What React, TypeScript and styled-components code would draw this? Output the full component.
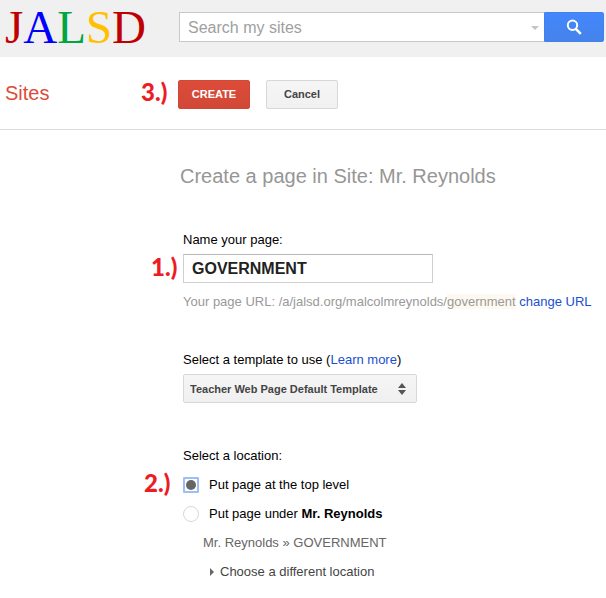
import React, { useState } from "react";
import styled, { createGlobalStyle } from "styled-components";

const GlobalStyle = createGlobalStyle`
  *, *::before, *::after { box-sizing: border-box; }
  body {
    margin: 0;
    background: #fff;
    color: #000;
    font: 13px/20px "Liberation Sans", Arial, sans-serif;
  }
  button, input, select { font-family: inherit; margin: 0; }
`;

const TopBar = styled.header`
  display: grid;
  grid-template-columns: 179px minmax(0, 1fr) 60px;
  align-items: center;
  padding: 0 2px 3px 0;
  height: 57px;
  background: #f0f0f0;
`;

const Logo = styled.a`
  padding-left: 5px;
  font: 47px/54px "Liberation Serif", "Times New Roman", serif;
  text-decoration: none;
`;

const Letter = styled.span<{ $color: string }>`
  color: ${(p) => p.$color};
`;

const SearchBox = styled.div`
  display: flex;
  align-items: center;
  height: 30px;
  padding: 1px 5px 0 8px;
  background: #fff;
  border: 1px solid #c8c8c8;
  border-right: 0;
`;

const SearchInput = styled.input`
  flex: 1;
  min-width: 0;
  padding: 0;
  border: 0;
  outline: 0;
  background: none;
  font-size: 16px;
  line-height: 24px;
  &::placeholder { color: #a0a0a0; opacity: 1; }
`;

const OptionsButton = styled.button`
  display: flex;
  padding: 0;
  border: 0;
  background: none;
`;

const SearchButton = styled.button`
  display: flex;
  align-items: center;
  justify-content: center;
  height: 30px;
  padding: 0;
  border: 1px solid #4280ee;
  border-radius: 0 2px 2px 0;
  background: linear-gradient(#4387fd, #4683ea);
`;

const ActionBar = styled.div`
  display: flex;
  align-items: center;
  height: 73px;
  padding: 2px 0 0 5px;
  border-bottom: 1px solid #dcdcdc;
`;

const Product = styled.h1`
  flex: 0 0 136px;
  margin: 0;
  padding-bottom: 2px;
  color: #dd4b39;
  font-size: 20px;
  font-weight: 400;
  line-height: 24px;
`;

const Step = styled.span`
  padding-bottom: 4px;
  color: #ed1c24;
  font: 900 24px/24px Lato, "Open Sans", sans-serif;
`;

const ActionStep = styled(Step)`
  flex: 0 0 37px;
`;

const ActionButton = styled.button<{ $primary?: boolean }>`
  width: 72px;
  height: 29px;
  margin-right: 16px;
  padding: 0;
  border: 1px solid ${(p) => (p.$primary ? "#d14836" : "#d8d8d8")};
  border-radius: 2px;
  background: ${(p) =>
    p.$primary ? "linear-gradient(#dd4b39, #d14836)" : "linear-gradient(#f5f5f5, #f1f1f1)"};
  color: ${(p) => (p.$primary ? "#fff" : "#444")};
  font-size: 11px;
  font-weight: 700;
`;

const Title = styled.h2`
  margin: 34px 0 0 180px;
  color: #969696;
  font-size: 20px;
  font-weight: 400;
  line-height: 24px;
`;

const Section = styled.section<{ $gap: number }>`
  margin-top: ${(p) => p.$gap}px;
  padding-left: 183px;
`;

const Group = styled.fieldset`
  min-width: 0;
  margin: 43px 0 0;
  padding: 0;
  border: 0;
`;

const Label = styled.label`
  display: block;
`;

const Indent = styled.div`
  padding-left: 183px;
`;

const Line = styled.div`
  display: flex;
  white-space: pre;
`;

const StepRow = styled.div<{ $start: number }>`
  display: grid;
  grid-template-columns: ${(p) => 183 - p.$start}px minmax(0, 1fr);
  align-items: center;
  height: 29px;
  margin-top: 4px;
  padding-left: ${(p) => p.$start}px;
`;

const NameInput = styled.input`
  width: 250px;
  max-width: 100%;
  height: 29px;
  padding: 0 8px;
  border: 1px solid #d0d0d0;
  border-top-color: #b8b8b8;
  outline: 0;
  color: #222;
  font-size: 16px;
  font-weight: 700;
`;

const Url = styled.p`
  margin: 9px 0 0;
  color: #999;
  white-space: nowrap;
`;

const Slug = styled.span`
  background: #fef9f0;
`;

const Link = styled.a`
  color: #1a4fd0;
  text-decoration: none;
`;

const SelectFrame = styled.div`
  display: grid;
  width: 234px;
  max-width: 100%;
  margin-top: 4px;
  align-items: center;
  & > * { grid-area: 1 / 1; }
  & > svg { justify-self: end; margin-right: 11px; pointer-events: none; }
`;

const Select = styled.select`
  appearance: none;
  width: 100%;
  height: 29px;
  padding: 0 24px 0 6px;
  border: 1px solid #d8d8d8;
  border-radius: 2px;
  outline: 0;
  background: linear-gradient(#f5f5f5, #f0f0f0);
  color: #444;
  font-size: 11px;
  font-weight: 700;
`;

const Choice = styled.label`
  display: flex;
  align-items: center;
  gap: 10px;
  height: 29px;
`;

const Radio = styled.input`
  appearance: none;
  display: grid;
  place-items: center;
  flex: none;
  width: 16px;
  height: 16px;
  border: 1px solid #d8d8d8;
  border-radius: 50%;
  background: #fff;
  &:checked {
    border: 2px solid #9dbff5;
    border-radius: 1px;
  }
  &:checked::before {
    content: "";
    width: 10px;
    height: 10px;
    border-radius: 50%;
    background: #666;
  }
`;

const Path = styled.div`
  padding-left: 20px;
  color: #666;
  line-height: 29px;
`;

const Expander = styled.button`
  display: flex;
  align-items: center;
  gap: 6px;
  height: 29px;
  margin-left: 27px;
  padding: 0;
  border: 0;
  background: none;
  color: #444;
  font-size: 13px;
`;

const letters = [
  ["J", "#c00000"],
  ["A", "#0000ff"],
  ["L", "#00a63f"],
  ["S", "#ffc000"],
  ["D", "#c00000"],
];

export default function App() {
  const [name, setName] = useState("GOVERNMENT");
  const [place, setPlace] = useState("top");

  return (
    <>
      <GlobalStyle />
      <TopBar>
        <Logo href="#" aria-label="JALSD">
          {letters.map(([letter, color], i) => (
            <Letter key={i} $color={color}>{letter}</Letter>
          ))}
        </Logo>
        <SearchBox>
          <SearchInput type="search" aria-label="Search my sites" placeholder="Search my sites" />
          <OptionsButton aria-label="Search options">
            <svg width="8" height="4" viewBox="0 0 8 4"><path d="M0 0h8L4 4z" fill="#c4c4c4" /></svg>
          </OptionsButton>
        </SearchBox>
        <SearchButton aria-label="Search">
          <svg width="16" height="16" viewBox="0 0 16 16" fill="none" stroke="#fff">
            <circle cx="6.5" cy="6.3" r="4.7" strokeWidth="2" />
            <path d="M9.8 9.8l5 5" strokeWidth="2.6" />
          </svg>
        </SearchButton>
      </TopBar>

      <ActionBar>
        <Product>Sites</Product>
        <ActionStep>3.)</ActionStep>
        <ActionButton $primary>CREATE</ActionButton>
        <ActionButton>Cancel</ActionButton>
      </ActionBar>

      <main>
        <Title>Create a page in Site: Mr. Reynolds</Title>

        <Section $gap={42}>
          <Label htmlFor="page-name">Name your page:</Label>
        </Section>
        <StepRow $start={151}>
          <Step>1.)</Step>
          <NameInput id="page-name" value={name} onChange={(e) => setName(e.target.value)} />
        </StepRow>
        <Indent>
          <Url>
            Your page URL: /a/jalsd.org/malcolmreynolds/<Slug>government</Slug>{" "}
            <Link href="#">change URL</Link>
          </Url>
        </Indent>

        <Section $gap={38}>
          <Line>
            <label htmlFor="template">Select a template to use </label>
            (<Link href="#">Learn more</Link>)
          </Line>
          <SelectFrame>
            <Select id="template">
              <option>Teacher Web Page Default Template</option>
            </Select>
            <svg width="8" height="12" viewBox="0 0 8 12" fill="#555">
              <path d="M0 5l4-5 4 5zM0 7h8l-4 5z" />
            </svg>
          </SelectFrame>
        </Section>

        <Group aria-labelledby="location">
          <Indent id="location">Select a location:</Indent>
          <StepRow $start={144}>
            <Step>2.)</Step>
            <Choice>
              <Radio type="radio" name="place" checked={place === "top"} onChange={() => setPlace("top")} />
              Put page at the top level
            </Choice>
          </StepRow>
          <Indent>
            <Choice>
              <Radio type="radio" name="place" checked={place === "under"} onChange={() => setPlace("under")} />
              <span>Put page under <b>Mr. Reynolds</b></span>
            </Choice>
            <Path>Mr. Reynolds » GOVERNMENT</Path>
            <Expander>
              <svg width="4" height="8" viewBox="0 0 4 8"><path d="M0 0l4 4-4 4z" fill="#666" /></svg>
              Choose a different location
            </Expander>
          </Indent>
        </Group>
      </main>
    </>
  );
}
